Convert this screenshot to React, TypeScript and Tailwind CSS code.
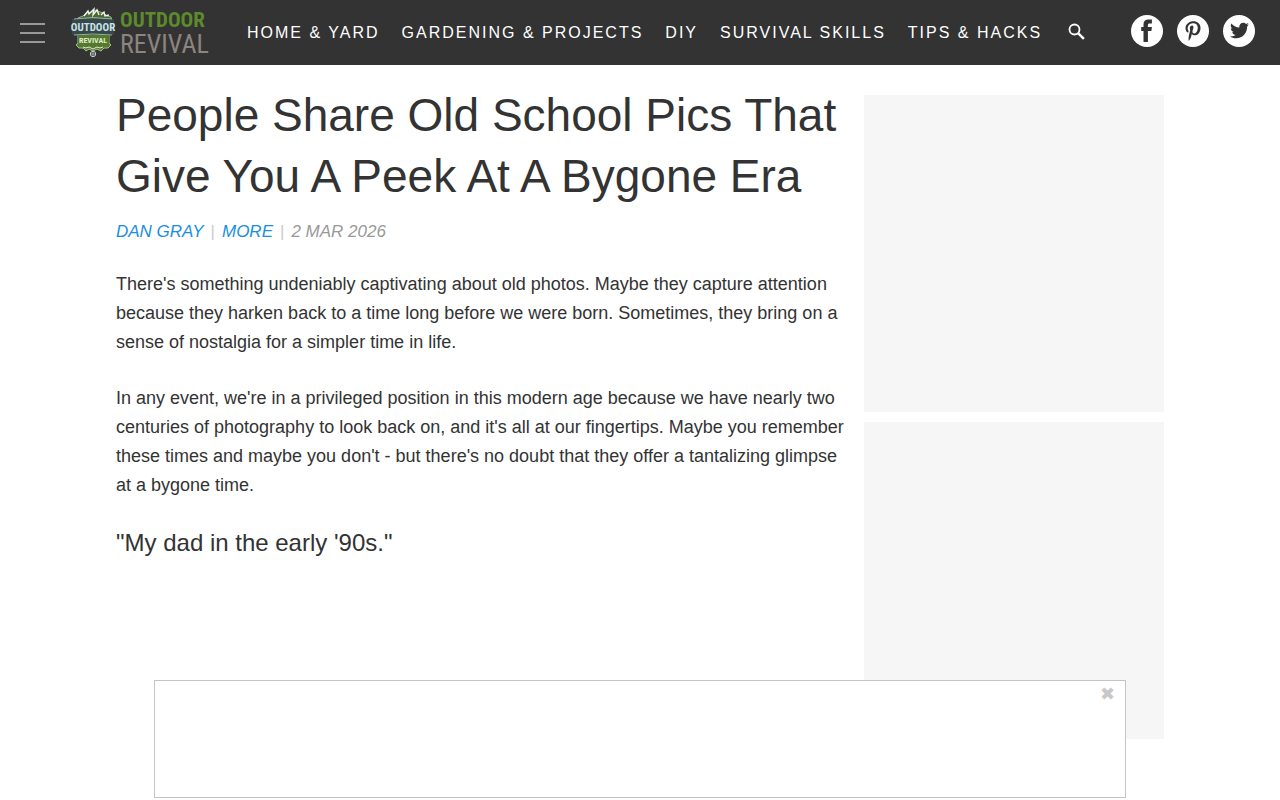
import { FaPinterestP, FaTwitter } from "react-icons/fa";

const navLinks = ["Home & Yard", "Gardening & Projects", "DIY", "Survival Skills", "Tips & Hacks"];

const paragraphs = [
  "There's something undeniably captivating about old photos. Maybe they capture attention because they harken back to a time long before we were born. Sometimes, they bring on a sense of nostalgia for a simpler time in life.",
  "In any event, we're in a privileged position in this modern age because we have nearly two centuries of photography to look back on, and it's all at our fingertips. Maybe you remember these times and maybe you don't - but there's no doubt that they offer a tantalizing glimpse at a bygone time.",
];

const Logo = () => (
  <svg
    width="148"
    height="54"
    viewBox="0 -2 148 54"
    role="img"
    aria-label="Outdoor Revival"
    fontFamily="'Roboto Condensed', 'Liberation Sans Narrow', sans-serif"
  >
    {/* badge */}
    <path
      d="M5 13l2-3 5-2 3-3 6-1 4-2 4 2 4 1 3 3 4 1 1 4z"
      fill="#4b6632"
      stroke="#b9c9ab"
      strokeWidth="0.8"
    />
    <path
      d="M13 8l4-5 1 3 5-5-1 6 4-5 2 5M30 7l3-3 1 4 4-1"
      fill="none"
      stroke="#eef3ec"
      strokeWidth="1.4"
    />
    <path
      d="M7 26h31v9l2 2-3 3-4 0-3 3-4-2-4 2-4-2-3 2-3-3-4 0-3-3 2-2z"
      fill="#557a2c"
      stroke="#a8bd90"
      strokeWidth="1"
    />
    <path d="M1 11h42v16H1z" fill="#37474a" />
    <path d="M3 11q19-3 38 0M3 27q19-2 38 0" fill="none" stroke="#8fb0b2" strokeWidth="1" />
    <text x="22" y="23" textAnchor="middle" fontSize="11" fontWeight="700" fill="#c9e4e8">
      OUTDOOR
    </text>
    <path d="M7 27h31v9q-15 3-31 0z" fill="#557a2c" />
    <text x="22" y="35" textAnchor="middle" fontSize="8" fontWeight="700" fill="#e0ead0">
      REVIVAL
    </text>
    <path d="M12 39l3 1 3-1 4 2 4-2 3 1 3-1" fill="none" stroke="#dfe8d4" strokeWidth="1" />
    <circle cx="22" cy="46" r="2.7" fill="#333" stroke="#c8ccc8" strokeWidth="1" />
    <path d="M22 43v6M19 46h6" stroke="#c8ccc8" strokeWidth="0.7" />
    {/* wordmark */}
    <text x="49" y="19" fontSize="21" fontWeight="700" fill="#5d8a2b">
      OUTDOOR
    </text>
    <text x="49" y="45" fontSize="26" fill="#8c857f">
      REVIVAL
    </text>
  </svg>
);

const SearchIcon = () => (
  <svg width="18" height="18" viewBox="0 0 18 18" fill="none" stroke="currentColor">
    <circle cx="6.5" cy="6.5" r="5" strokeWidth="1.8" />
    <path d="M10.3 10.3l5.6 5.6" strokeWidth="2.4" />
  </svg>
);

const FacebookIcon = () => (
  <svg width="32" height="32" viewBox="0 0 32 32" fill="currentColor">
    <path d="M12.5 27V16h-2.3v-3.9h2.3V9.6c0-3.3 1.6-5 5-5h3.4v4h-2.2c-1.4 0-1.8.5-1.8 1.7v1.8h4l-.5 3.9h-3.5v11z" />
  </svg>
);

const socials = [
  { label: "Facebook", icon: <FacebookIcon /> },
  { label: "Pinterest", icon: <FaPinterestP size={20} /> },
  { label: "Twitter", icon: <FaTwitter size={19} /> },
];

const Header = () => (
  <header className="flex h-[65px] items-center bg-[#333] px-5 text-white">
    <button type="button" aria-label="Menu" className="flex w-[25px] shrink-0 flex-col gap-[7px]">
      <span className="h-0.5 w-full bg-[#999]" />
      <span className="h-0.5 w-full bg-[#999]" />
      <span className="h-0.5 w-full bg-[#999]" />
    </button>
    <a href="#" className="ml-[26px] shrink-0">
      <Logo />
    </a>
    <nav className="ml-7 flex items-center gap-[22px] whitespace-nowrap text-base uppercase tracking-[2px]">
      {navLinks.map((link) => (
        <a key={link} href="#">
          {link}
        </a>
      ))}
    </nav>
    <button type="button" aria-label="Search" className="ml-[26px] pb-0.5">
      <SearchIcon />
    </button>
    <div className="ml-auto flex gap-[14px] pr-[5px] pb-1">
      {socials.map(({ label, icon }) => (
        <a
          key={label}
          href="#"
          aria-label={label}
          className="flex size-8 items-center justify-center rounded-full bg-white text-[#333]"
        >
          {icon}
        </a>
      ))}
    </div>
  </header>
);

const Article = () => (
  <article className="min-w-0 flex-1 text-[#333]">
    <h1 className="text-[46px] leading-[61px]">
      People Share Old School Pics That Give You A Peek At A Bygone Era
    </h1>
    <p className="mt-[13px] flex gap-[7px] text-[17px] leading-6 text-[#999] uppercase italic">
      <a href="#" className="text-[#1a8fe0]">
        Dan Gray
      </a>
      <span className="text-[#ccc] not-italic">|</span>
      <a href="#" className="text-[#1a8fe0]">
        More
      </a>
      <span className="text-[#ccc] not-italic">|</span>
      <time dateTime="2026-03-02">2 Mar 2026</time>
    </p>
    <div className="mt-[26px] space-y-[27px] text-lg leading-[29px]">
      {paragraphs.map((text) => (
        <p key={text}>{text}</p>
      ))}
    </div>
    <h2 className="mt-[27px] text-2xl leading-8">"My dad in the early '90s."</h2>
  </article>
);

const StickyAd = () => (
  <aside className="fixed inset-x-0 bottom-0.5 mx-auto flex h-[118px] w-full max-w-[972px] items-start justify-end border border-[#c4c4c4] bg-white">
    <button
      type="button"
      aria-label="Close"
      className="mr-2.5 font-['DejaVu_Sans',sans-serif] text-lg leading-[26px] text-[#c8c8c8]"
    >
      ✖
    </button>
  </aside>
);

export default function App() {
  return (
    <div className="bg-white font-['Liberation_Sans',Arial,sans-serif]">
      <Header />
      <main className="mx-auto flex max-w-[1048px] gap-5 pt-5">
        <Article />
        <aside className="flex w-[300px] shrink-0 flex-col gap-2.5 pt-2.5">
          <div className="h-[317px] bg-[#f6f6f6]" />
          <div className="h-[317px] bg-[#f6f6f6]" />
        </aside>
      </main>
      <StickyAd />
    </div>
  );
}
